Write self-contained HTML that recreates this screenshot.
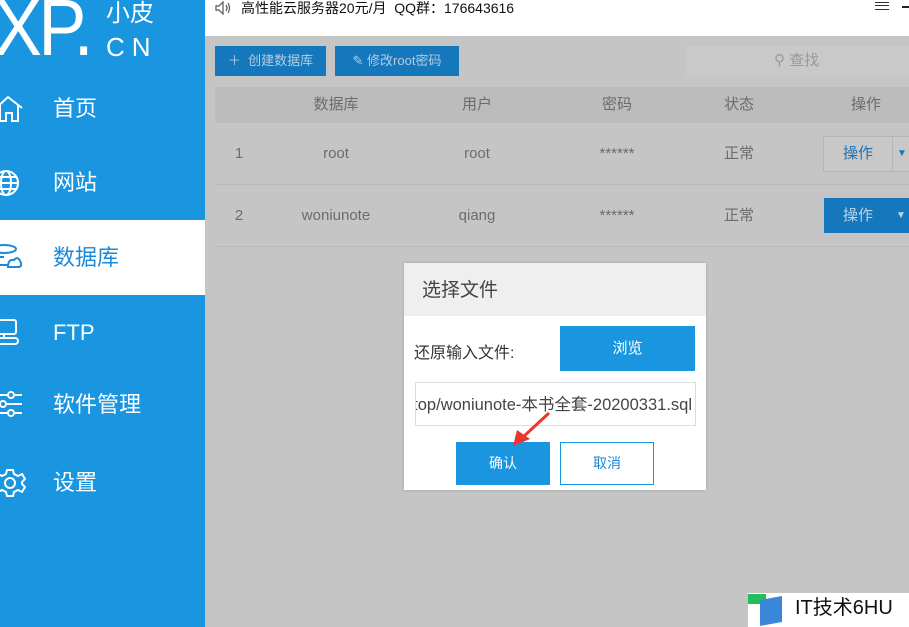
<!DOCTYPE html>
<html><head><meta charset="utf-8"><style>
*{margin:0;padding:0;box-sizing:border-box}
body{width:909px;height:627px;overflow:hidden;position:relative;background:#c5c5c5;font-family:"Liberation Sans","Noto Sans CJK SC",sans-serif}
.a{position:absolute}
.side{left:0;top:0;width:205px;height:627px;background:#1a96e1}
.nav{position:absolute;left:0;width:205px;height:75px;color:#fff;font-size:22px;line-height:75px;padding-left:53px}
.nav svg{position:absolute;left:-4px;top:23px}
.sel{background:#fff;color:#1a89d6}
.top{left:205px;top:0;width:704px;height:36px;background:#fff}
.btn{background:#1577bc;color:#b3cde0;font-size:13px;line-height:30px;text-align:center}
.th{left:215px;top:87px;width:694px;height:36px;background:#bcbcbc;color:#555;font-size:14px}
.t{position:absolute;font-size:15px;color:#6c6c6c;transform:translateX(-50%);line-height:18px;white-space:nowrap}
.row{left:215px;width:694px;border-bottom:1px solid #b8b8b8}
</style></head><body>
<div class="a side">
 <div class="a" style="left:-6px;top:-20px;color:#fff;font-size:80px;line-height:96px;letter-spacing:-4px;transform:scaleX(0.9);transform-origin:0 0;font-family:'Liberation Sans',sans-serif">XP.</div>
 <div class="a" style="left:106px;top:1px;color:#fff;font-size:24px;line-height:26px">小皮</div>
 <div class="a" style="left:106px;top:32px;color:#fff;font-size:26px;line-height:30px;letter-spacing:7px">CN</div>
 <div class="nav" style="top:71px">首页<svg width="28" height="30" viewBox="0 0 28 30" fill="none" stroke="#fff" stroke-width="2"><path d="M0 14 L12 3 L26 14 M4 11 V27 H10 V19 H16 V27 H22 V11"/></svg></div>
 <div class="nav" style="top:145px">网站<svg width="28" height="30" viewBox="0 0 28 30" fill="none" stroke="#fff" stroke-width="2"><circle cx="10" cy="15" r="12"/><ellipse cx="10" cy="15" rx="5" ry="12"/><path d="M-2 15H22M0 9H20M0 21H20"/></svg></div>
 <div class="nav sel" style="top:220px">数据库<svg width="28" height="30" viewBox="0 0 28 30" fill="none" stroke="#1a89d6" stroke-width="2"><ellipse cx="8" cy="6" rx="12" ry="4"/><path d="M-4 6V22H12M-4 14H8"/><path d="M12 24 Q12 16 18 17 Q22 12 25 20 Q26 24 22 24Z"/></svg></div>
 <div class="nav" style="top:295px">FTP<svg width="28" height="30" viewBox="0 0 28 30" fill="none" stroke="#fff" stroke-width="2"><rect x="-4" y="2" width="24" height="14" rx="2"/><path d="M8 16V20"/><rect x="-2" y="20" width="24" height="6" rx="3"/></svg></div>
 <div class="nav" style="top:367px">软件管理<svg width="28" height="30" viewBox="0 0 28 30" fill="none" stroke="#fff" stroke-width="2"><path d="M0 5H12M19 5H26M0 14H4M11 14H26M0 23H12M19 23H26"/><circle cx="15" cy="5" r="3"/><circle cx="7" cy="14" r="3"/><circle cx="15" cy="23" r="3"/></svg></div>
 <div class="nav" style="top:445px">设置<svg width="30" height="30" viewBox="0 0 30 30" fill="none" stroke="#fff" stroke-width="2"><path d="M11 2H17L18 6L22 8L26 6L29 11L26 14V16L29 19L26 24L22 22L18 24L17 28H11L10 24L6 22L2 24L-1 19L2 16V14L-1 11L2 6L6 8L10 6Z"/><circle cx="14" cy="15" r="5"/></svg></div>
</div>
<div class="a top">
 <svg class="a" style="left:10px;top:1px" width="16" height="14" viewBox="0 0 16 14" fill="none" stroke="#555" stroke-width="1.2"><path d="M1 5H4L8 1V13L4 9H1Z"/><path d="M11 4Q13 7 11 10M13 2Q16 7 13 12"/></svg>
 <div class="a" style="left:36px;top:0;font-size:14px;line-height:17px;color:#111">高性能云服务器20元/月&nbsp; QQ群：176643616</div>
 <div class="a" style="left:670px;top:2px;width:14px;height:8px;border-top:1px solid #333;border-bottom:1px solid #333"></div>
 <div class="a" style="left:670px;top:5px;width:14px;height:1px;background:#333"></div>
 <div class="a" style="left:697px;top:6px;width:7px;height:2px;background:#222"></div>
</div>
<div class="a btn" style="left:215px;top:46px;width:111px;height:30px">＋&nbsp; 创建数据库</div>
<div class="a btn" style="left:335px;top:46px;width:124px;height:30px">✎ 修改root密码</div>
<div class="a" style="left:686px;top:46px;width:223px;height:30px;background:#c9c9c9;color:#999;font-size:15px;line-height:30px;padding-left:88px">⚲ 查找</div>
<div class="a th"><span class="t" style="left:121px;top:9px">数据库</span><span class="t" style="left:262px;top:9px">用户</span><span class="t" style="left:402px;top:9px">密码</span><span class="t" style="left:524px;top:9px">状态</span><span class="t" style="left:651px;top:9px">操作</span></div>
<div class="a row" style="top:123px;height:62px">
 <span class="t" style="left:24px;top:22px">1</span><span class="t" style="left:121px;top:22px">root</span><span class="t" style="left:262px;top:22px">root</span><span class="t" style="left:402px;top:22px">******</span><span class="t" style="left:524px;top:22px">正常</span>
 <div class="a" style="left:608px;top:13px;width:90px;height:36px;border:1px solid #b5b5b5;background:#c8c8c8;color:#1c73b3;font-size:15px;line-height:34px;padding-left:19px">操作<span style="position:absolute;left:68px;top:0;border-left:1px solid #b5b5b5;padding-left:4px;font-size:10px">▼</span></div>
</div>
<div class="a row" style="top:185px;height:62px">
 <span class="t" style="left:24px;top:22px">2</span><span class="t" style="left:121px;top:22px">woniunote</span><span class="t" style="left:262px;top:22px">qiang</span><span class="t" style="left:402px;top:22px">******</span><span class="t" style="left:524px;top:22px">正常</span>
 <div class="a" style="left:609px;top:13px;width:90px;height:35px;background:#1577bc;color:#c0d4e4;font-size:15px;line-height:35px;padding-left:19px">操作<span style="position:absolute;left:72px;top:0;font-size:10px">▼</span></div>
</div>
<div class="a" style="left:404px;top:263px;width:302px;height:227px;background:#fff;box-shadow:0 0 3px rgba(0,0,0,.2)">
 <div style="height:53px;background:#efefef;font-size:19px;color:#444;line-height:55px;padding-left:18px">选择文件</div>
 <div class="a" style="left:10px;top:76px;font-size:16px;color:#333">还原输入文件:</div>
 <div class="a" style="left:156px;top:63px;width:135px;height:45px;background:#1a96e1;color:#fff;font-size:15px;line-height:45px;text-align:center">浏览</div>
 <div class="a" style="left:11px;top:119px;width:281px;height:44px;border:1px solid #ddd;overflow:hidden"><div class="a" style="right:3px;top:0;font-size:16.5px;color:#444;line-height:44px;white-space:nowrap">top/woniunote-本书全套-20200331.sql</div></div>
 <div class="a" style="left:52px;top:179px;width:94px;height:43px;background:#1a96e1;color:#fff;font-size:14px;line-height:43px;text-align:center">确认</div>
 <div class="a" style="left:156px;top:179px;width:94px;height:43px;border:1px solid #1a96e1;color:#1a89d6;font-size:14px;line-height:41px;text-align:center">取消</div>
 <svg class="a" style="left:100px;top:145px" width="50" height="45" viewBox="0 0 50 45"><path d="M45 5 L18 30" stroke="#e8372f" stroke-width="3"/><path d="M9 38 L13 22 L26 31Z" fill="#e8372f"/></svg>
</div>
<div class="a" style="left:748px;top:593px;width:161px;height:34px;background:#fff"></div>
<div class="a" style="left:748px;top:594px;width:18px;height:10px;background:#1fc05a"></div>
<div class="a" style="left:760px;top:598px;width:22px;height:26px;background:#3a86d9;transform:skewY(-10deg)"></div>
<div class="a" style="left:795px;top:596px;font-size:20px;color:#111;line-height:24px">IT技术6HU</div>
</body></html>
